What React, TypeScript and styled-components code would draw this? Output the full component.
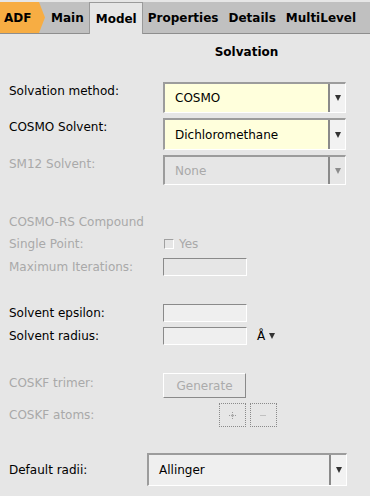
import React from "react";
import styled, { createGlobalStyle } from "styled-components";

const Global = createGlobalStyle`
  html, body {
    margin: 0;
    padding: 0;
    background: #e6e6e6;
    font-family: "DejaVu Sans", "Liberation Sans", sans-serif;
    font-size: 12px;
    color: #000;
  }
`;

const App: React.FC = () => {
  return (
    <Page>
      <Global />
      <TabBar>
        <AppTab>ADF</AppTab>
        <Tab>Main</Tab>
        <Tab $active>Model</Tab>
        <Tab>Properties</Tab>
        <Tab>Details</Tab>
        <Tab>MultiLevel</Tab>
      </TabBar>

      <Heading>Solvation</Heading>

      <Row $mt={23} $h={31}>
        <Label $pt={2}>Solvation method:</Label>
        <Combo $bg="#ffffdc">
          <ComboText>COSMO</ComboText>
          <ComboArrow><Triangle /></ComboArrow>
        </Combo>
      </Row>
      <Row $mt={5} $h={32}>
        <Label $pt={2}>COSMO Solvent:</Label>
        <Combo $bg="#ffffdc">
          <ComboText>Dichloromethane</ComboText>
          <ComboArrow><Triangle /></ComboArrow>
        </Combo>
      </Row>
      <Row $mt={5} $h={30}>
        <Label $pt={2} $disabled>SM12 Solvent:</Label>
        <Combo $bg="#e6e6e6">
          <ComboText $disabled>None</ComboText>
          <ComboArrow $disabled><Triangle $disabled /></ComboArrow>
        </Combo>
      </Row>

      <Row $mt={30} $h={14}>
        <Label $disabled>COSMO-RS Compound</Label>
      </Row>
      <Row $mt={8} $h={14} $center>
        <Label $disabled>Single Point:</Label>
        <Check>
          <CheckBox />
          <CheckText>Yes</CheckText>
        </Check>
      </Row>
      <Row $mt={7} $h={18} $center>
        <Label $disabled>Maximum Iterations:</Label>
        <Field $bg="#e6e6e6" />
      </Row>

      <Row $mt={28} $h={18} $center>
        <Label>Solvent epsilon:</Label>
        <Field />
      </Row>
      <Row $mt={5} $h={18} $center>
        <Label>Solvent radius:</Label>
        <Field />
        <Unit>
          <span>Å</span>
          <Triangle $small />
        </Unit>
      </Row>

      <Row $mt={28} $h={25}>
        <Label $pt={3} $disabled>COSKF trimer:</Label>
        <Button>Generate</Button>
      </Row>
      <Row $mt={5} $h={24} $center>
        <Label $disabled>COSKF atoms:</Label>
        <IconButtons>
          <SmallButton>
            <svg width="9" height="9" viewBox="0 0 9 9">
              <path d="M4.5 1v7M1 4.5h7" stroke="#9a9a9a" strokeWidth="1" strokeDasharray="1 1" />
              <path d="M3.5 3.5h2v2h-2z" fill="#b0b0b0" />
            </svg>
          </SmallButton>
          <SmallButton>
            <svg width="9" height="9" viewBox="0 0 9 9">
              <path d="M1.5 4.5h6" stroke="#9a9a9a" strokeWidth="1" strokeDasharray="1 1" />
            </svg>
          </SmallButton>
        </IconButtons>
      </Row>

      <Row $mt={26} $h={33} $center>
        <Label $w={138}>Default radii:</Label>
        <Combo $bg="#efefef" $w={200}>
          <ComboText>Allinger</ComboText>
          <ComboArrow><Triangle /></ComboArrow>
        </Combo>
      </Row>
    </Page>
  );
};

export default App;

const Page = styled.div`
  width: 370px;
  height: 496px;
  overflow: hidden;
  display: flex;
  flex-direction: column;
`;

const TabBar = styled.div`
  margin-top: 2px;
  height: 31px;
  display: flex;
  background: #c0c0c0;
  border-bottom: 1px solid #8e8e8e;
  font-weight: bold;
`;

const AppTab = styled.div`
  width: 46px;
  padding-left: 4px;
  box-sizing: border-box;
  display: flex;
  align-items: center;
  background: #f7ad43;
  clip-path: polygon(0 0, 39px 0, 45px 50%, 39px 100%, 0 100%);
`;

const Tab = styled.div<{ $active?: boolean }>`
  display: flex;
  align-items: center;
  padding: ${(p) => (p.$active ? "0 5px 0 6px" : "0 5px")};
  background: ${(p) => (p.$active ? "#e6e6e6" : "transparent")};
  border: ${(p) => (p.$active ? "1px solid #9a9a9a" : "none")};
  border-bottom: none;
  margin-bottom: ${(p) => (p.$active ? "-1px" : "0")};
`;

const Heading = styled.div`
  margin: 11px 0 0 163px;
  width: 167px;
  height: 14px;
  line-height: 14px;
  text-align: center;
  font-weight: bold;
`;

const Row = styled.div<{ $mt: number; $h: number; $center?: boolean }>`
  margin-top: ${(p) => p.$mt}px;
  height: ${(p) => p.$h}px;
  padding-left: 9px;
  display: flex;
  align-items: ${(p) => (p.$center ? "center" : "flex-start")};
`;

const Label = styled.div<{ $disabled?: boolean; $pt?: number; $w?: number }>`
  width: ${(p) => p.$w ?? 154}px;
  flex-shrink: 0;
  padding-top: ${(p) => p.$pt ?? 0}px;
  line-height: 14px;
  white-space: nowrap;
  color: ${(p) => (p.$disabled ? "#a9a9a9" : "#000")};
`;

const Combo = styled.div<{ $bg: string; $w?: number }>`
  width: ${(p) => p.$w ?? 183}px;
  height: 100%;
  box-sizing: border-box;
  display: flex;
  background: ${(p) => p.$bg};
  border-top: 2px solid #9c9c9c;
  border-left: 2px solid #9c9c9c;
  border-right: 1px solid #ffffff;
  border-bottom: 1px solid #ffffff;
`;

const ComboText = styled.div<{ $disabled?: boolean }>`
  flex: 1;
  display: flex;
  align-items: center;
  padding-left: 10px;
  color: ${(p) => (p.$disabled ? "#a9a9a9" : "#000")};
`;

const ComboArrow = styled.div<{ $disabled?: boolean }>`
  width: 15px;
  display: flex;
  align-items: center;
  justify-content: center;
  background: ${(p) => (p.$disabled ? "#e6e6e6" : "#f2f2f2")};
  border-left: 2px solid #8a8a8a;
`;

const Triangle = styled.span<{ $disabled?: boolean; $small?: boolean }>`
  display: inline-block;
  width: 0;
  height: 0;
  border-left: ${(p) => (p.$small ? 3 : 3.5)}px solid transparent;
  border-right: ${(p) => (p.$small ? 3 : 3.5)}px solid transparent;
  border-top: ${(p) => (p.$small ? 6 : 6)}px solid ${(p) => (p.$disabled ? "#8c8c8c" : "#333")};
`;

const Check = styled.div`
  display: flex;
  align-items: center;
  gap: 5px;
  margin-left: 1px;
`;

const CheckBox = styled.span`
  width: 10px;
  height: 10px;
  box-sizing: border-box;
  border-top: 1px solid #a0a0a0;
  border-left: 1px solid #a0a0a0;
  border-right: 1px solid #ffffff;
  border-bottom: 1px solid #ffffff;
`;

const CheckText = styled.span`
  color: #a9a9a9;
  line-height: 14px;
`;

const Field = styled.div<{ $bg?: string }>`
  width: 84px;
  height: 18px;
  box-sizing: border-box;
  background: ${(p) => p.$bg ?? "#efefef"};
  border-top: 1px solid #8a8a8a;
  border-left: 1px solid #8a8a8a;
  border-right: 1px solid #ffffff;
  border-bottom: 1px solid #ffffff;
`;

const Unit = styled.div`
  margin-left: 10px;
  display: flex;
  align-items: center;
  gap: 4px;
  line-height: 14px;
`;

const Button = styled.div`
  width: 83px;
  height: 25px;
  box-sizing: border-box;
  display: flex;
  align-items: center;
  justify-content: center;
  color: #ababab;
  background: #e6e6e6;
  border-top: 1px solid #ffffff;
  border-left: 1px solid #ffffff;
  border-right: 1px solid #8a8a8a;
  border-bottom: 1px solid #8a8a8a;
`;

const IconButtons = styled.div`
  margin-left: 56px;
  display: flex;
  gap: 4px;
`;

const SmallButton = styled.div`
  width: 27px;
  height: 24px;
  box-sizing: border-box;
  display: flex;
  align-items: center;
  justify-content: center;
  border: 1px dotted #8a8a8a;
  background: #e6e6e6;
`;
